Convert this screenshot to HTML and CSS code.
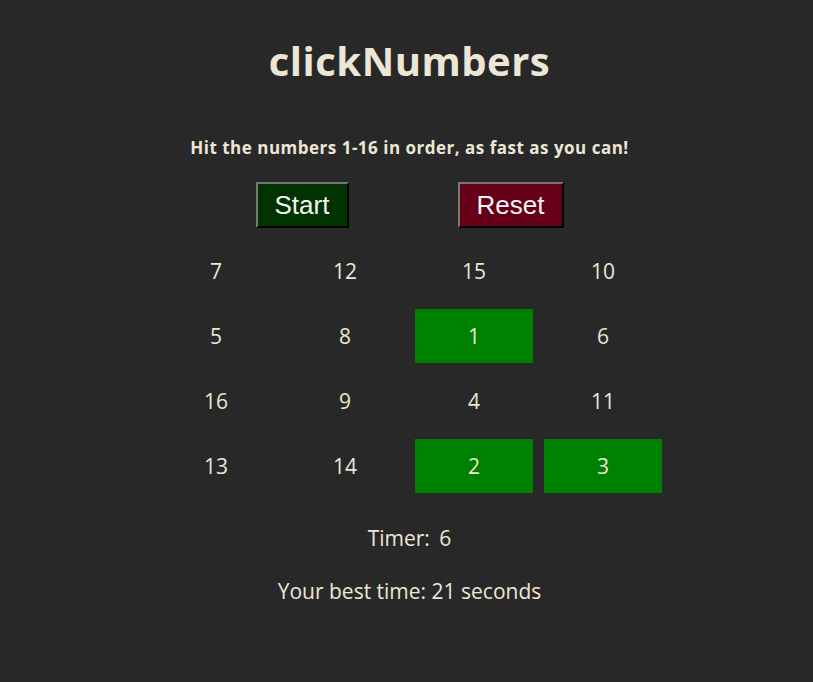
FILE: index.html
```html
<!DOCTYPE html>
<html>
<head>
<meta charset="utf-8">
<link rel="stylesheet" href="styles.css">
</head>
<body>
<main class="game">
  <h1 class="title">clickNumbers</h1>
  <p class="intro">Hit the numbers 1-16 in order, as fast as you can!</p>
  <div class="controls">
    <button class="btn btn-start">Start</button>
    <button class="btn btn-reset">Reset</button>
  </div>
  <div class="board">
    <div class="cell">7</div>
    <div class="cell">12</div>
    <div class="cell">15</div>
    <div class="cell">10</div>
    <div class="cell">5</div>
    <div class="cell">8</div>
    <div class="cell hit">1</div>
    <div class="cell">6</div>
    <div class="cell">16</div>
    <div class="cell">9</div>
    <div class="cell">4</div>
    <div class="cell">11</div>
    <div class="cell">13</div>
    <div class="cell">14</div>
    <div class="cell hit">2</div>
    <div class="cell hit">3</div>
  </div>
  <p class="timer">Timer: 6</p>
  <p class="best">Your best time: 21 seconds</p>
</main>
</body>
</html>
```
FILE: styles.css
```css
html, body {
  margin: 0;
  padding: 0;
}
body {
  background: #282828;
  color: #ece6d6;
  font-family: "Open Sans", "Noto Sans", sans-serif;
  width: 813px;
  min-height: 682px;
}
.game {
  display: flex;
  flex-direction: column;
  align-items: center;
  padding-left: 6px;
}
.title {
  margin: 33px 0 0;
  font-size: 40px;
  font-weight: 700;
  line-height: 56px;
  letter-spacing: 0.5px;
}
.intro {
  margin: 48px 0 0;
  font-size: 17px;
  font-weight: 700;
  line-height: 22px;
  letter-spacing: 0.5px;
}
.controls {
  display: flex;
  gap: 109px;
  margin-top: 23px;
}
.btn {
  font-family: "Liberation Sans", Arial, sans-serif;
  font-size: 26px;
  color: #f4f4f4;
  height: 46px;
  padding: 0 10px;
  border: 2px outset #777;
  border-right-color: #111;
  border-bottom-color: #111;
  line-height: 40px;
}
.btn-start {
  background: #003300;
  width: 93px;
}
.btn-reset {
  background: #660019;
  width: 106px;
}
.board {
  display: grid;
  grid-template-columns: repeat(4, 118px);
  grid-auto-rows: 54px;
  gap: 11px;
  margin-top: 16px;
}
.cell {
  display: flex;
  align-items: center;
  justify-content: center;
  font-size: 21px;
}
.cell.hit {
  background: #008000;
}
.timer {
  margin: 27px 0 0;
  font-size: 21px;
  line-height: 36px;
  word-spacing: 4px;
}
.best {
  margin: 17px 0 0;
  font-size: 21px;
  line-height: 36px;
}
```
